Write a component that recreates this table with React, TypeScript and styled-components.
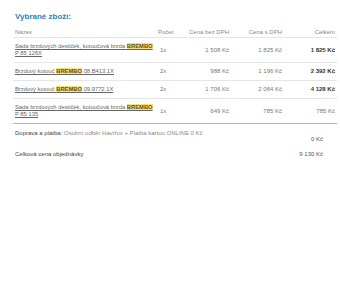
import React from "react";
import styled, { createGlobalStyle } from "styled-components";

const Global = createGlobalStyle`
  html, body { margin: 0; padding: 0; background: #fff; }
  body { font-family: "Liberation Sans", Arial, sans-serif; }
`;

const Wrapper = styled.div`
  padding: 12px 15px 0 13px;
  width: 312px;
`;

const Title = styled.h2`
  margin: 0 0 7px 2px;
  font-size: 8px;
  line-height: 10px;
  font-weight: bold;
  color: #2b80c2;
`;

const Table = styled.table`
  width: 312px;
  border-collapse: collapse;
  table-layout: fixed;
  font-size: 6px;
  line-height: 7px;
  color: #666;
`;

const Th = styled.th<{ $align?: string; $w: number; $pr?: number; $pl?: number }>`
  width: ${(p) => p.$w}px;
  text-align: ${(p) => p.$align || "left"};
  font-weight: normal;
  color: #888;
  padding: 0 ${(p) => p.$pr ?? 0}px 1px ${(p) => p.$pl ?? 0}px;
  border-bottom: 1px solid #e6e6e6;
  height: 7px;
`;

const Tr = styled.tr<{ $last?: boolean }>`
  border-bottom: ${(p) => (p.$last ? "1.5px solid #b5b5b5" : "1px solid #e6e6e6")};
`;

const Td = styled.td<{ $align?: string; $pr?: number; $pl?: number; $strong?: boolean }>`
  text-align: ${(p) => p.$align || "left"};
  padding: 5px ${(p) => p.$pr ?? 0}px 5px ${(p) => p.$pl ?? 0}px;
  vertical-align: middle;
  color: ${(p) => (p.$strong ? "#333" : "#777")};
  font-weight: ${(p) => (p.$strong ? "bold" : "normal")};
  white-space: nowrap;
`;

const Link = styled.a`
  color: #666;
  font-size: 5.8px;
  text-decoration: underline;
`;

const Brand = styled.span`
  background: #f3df86;
  color: #6b5200;
  font-weight: bold;
`;

const SummaryRow = styled.div<{ $mt: number }>`
  display: flex;
  justify-content: space-between;
  align-items: flex-start;
  margin-top: ${(p) => p.$mt}px;
  padding: 0 2px;
  font-size: 6px;
  line-height: 7px;
  color: #888;
`;

const Label = styled.span`
  color: #444;
`;

const Amount = styled.span<{ $offset: number }>`
  margin-top: ${(p) => p.$offset}px;
  color: #555;
`;

const items = [
  { pre: "Sada brzdových destiček, kotoučová brzda ", post: "P 85 126X", wrap: true, qty: "1x", net: "1 508 Kč", gross: "1 825 Kč", total: "1 825 Kč" },
  { pre: "Brzdový kotouč ", post: "08.B413.1X", wrap: false, qty: "2x", net: "988 Kč", gross: "1 196 Kč", total: "2 392 Kč" },
  { pre: "Brzdový kotouč ", post: "09.9772.1X", wrap: false, qty: "2x", net: "1 706 Kč", gross: "2 064 Kč", total: "4 128 Kč" },
  { pre: "Sada brzdových destiček, kotoučová brzda ", post: "P 85 135", wrap: true, qty: "1x", net: "649 Kč", gross: "785 Kč", total: "785 Kč" },
];

export default function App() {
  return (
    <>
      <Global />
      <Wrapper>
        <Title>Vybrané zboží:</Title>
        <Table>
          <thead>
            <tr>
              <Th $w={141} $pl={2}>Název</Th>
              <Th $w={28} $pl={2}>Počet</Th>
              <Th $w={43} $align="right" $pr={3}>Cena bez DPH</Th>
              <Th $w={50} $align="right" $pr={3}>Cena s DPH</Th>
              <Th $w={50} $align="right" $pr={2}>Celkem</Th>
            </tr>
          </thead>
          <tbody>
            {items.map((it, i) => (
              <Tr key={i} $last={i === items.length - 1}>
                <Td $pl={2}>
                  <Link>
                    {it.pre}
                    <Brand>BREMBO</Brand>
                    {it.wrap ? <br /> : " "}
                    {it.post}
                  </Link>
                </Td>
                <Td $pl={4}>{it.qty}</Td>
                <Td $align="right" $pr={3}>{it.net}</Td>
                <Td $align="right" $pr={3}>{it.gross}</Td>
                <Td $align="right" $pr={2} $strong={i !== 3}>{it.total}</Td>
              </Tr>
            ))}
          </tbody>
        </Table>
        <SummaryRow $mt={6}>
          <span>
            <Label>Doprava a platba: </Label>Osobní odběr Havířov + Platba kartou ONLINE 0 Kč
          </span>
          <Amount $offset={6}>0 Kč</Amount>
        </SummaryRow>
        <SummaryRow $mt={8}>
          <Label>Celková cena objednávky</Label>
          <Amount $offset={0}>9 130 Kč</Amount>
        </SummaryRow>
      </Wrapper>
    </>
  );
}
